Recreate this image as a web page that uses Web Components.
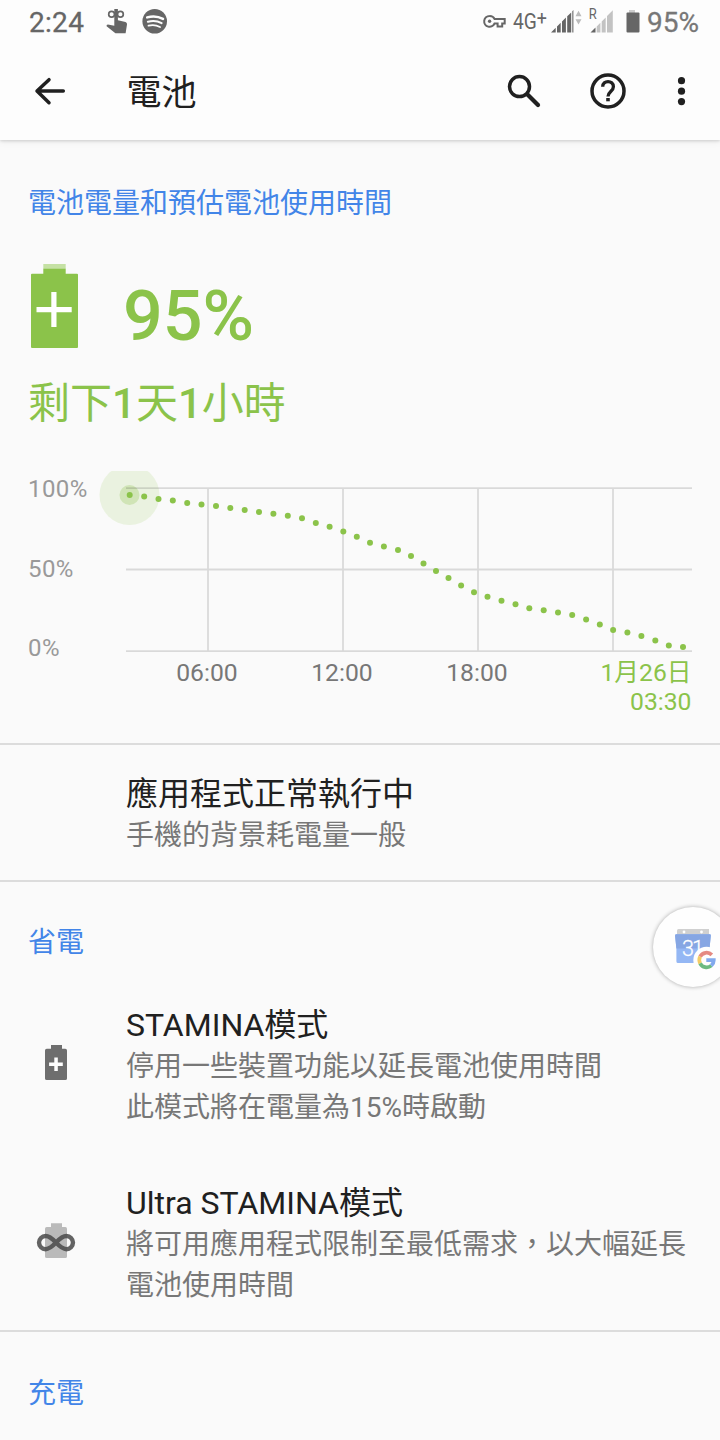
<!DOCTYPE html>
<html lang="zh-Hant-TW">
<head>
<meta charset="utf-8">
<title>電池</title>
<style>
html,body{margin:0;padding:0;background:#fafafa}
body{width:720px;height:1440px;overflow:hidden;position:relative;font-family:Roboto,"Noto Sans CJK TC",sans-serif;color:#202020}
</style>
</head>
<body>
<battery-page></battery-page>
<script>
const define = (name, html) => {
  const t = document.createElement('template');
  t.innerHTML = html;
  customElements.define(name, class extends HTMLElement {
    constructor() {
      super();
      this.attachShadow({mode: 'open'}).appendChild(t.content.cloneNode(true));
    }
  });
};

define('status-bar', `
<style>
:host{display:flex;height:44px;box-sizing:border-box;background:#fdfdfd;color:#666;align-items:flex-start}
.t{font-size:28px;line-height:32px;padding-top:7px;white-space:nowrap}
.clock{margin-left:29px;width:76px;letter-spacing:.3px;-webkit-text-stroke:.3px #666}
.pct{color:#777;width:73px;margin-left:7px;-webkit-text-stroke:.3px #777}
svg{display:block;flex:none}
.grow{flex:1}
</style>
<span class="t clock">2:24</span>
<svg width="24" height="44" viewBox="104 0 24 44"><g fill="none" stroke="#666" stroke-width="1.7"><ellipse cx="110.6" cy="14.3" rx="2.9" ry="2.9"/><ellipse cx="119.4" cy="14.3" rx="2.9" ry="2.9"/></g><path d="M113.3 9h3.6v11.2l7.6 1.800q1.800.6 1.500 2.600l-1.400 8.600h-10.200L105.600 26.300q-.4-1.500 1.300-1.700l6.400 1.200z" fill="#666"/></svg>
<svg width="28" height="44" viewBox="142 0 28 44" style="margin-left:13px"><circle cx="154.700" cy="21.300" r="12.300" fill="#666"/><g fill="none" stroke="#fdfdfd" stroke-linecap="round"><path d="M147.200 17.400q8.500-2.400 15.800 1.500" stroke-width="2.500"/><path d="M147.900 21.700q7.500-2 13.700 1.400" stroke-width="2.100"/><path d="M148.500 25.700q6.200-1.500 11.500 1.300" stroke-width="1.800"/></g></svg>
<span class="grow"></span>
<svg width="28" height="44" viewBox="482 0 28 44"><path d="M489.600 16a5.400 5.400 0 1 0 5 7.400h3v3.200h4.600v-3.200h2.500v-4.400h-10.100a5.400 5.400 0 0 0-5-3z" fill="none" stroke="#666" stroke-width="2"/><circle cx="489.600" cy="21.300" r="1.700" fill="#666"/></svg>
<svg width="40" height="44" viewBox="510 0 40 44"><text x="513" y="28.500" font-family="Roboto" font-size="21.500" fill="#666" textLength="34" lengthAdjust="spacingAndGlyphs">4G<tspan dy="-4" font-size="20">+</tspan></text></svg>
<svg width="70" height="44" viewBox="550 0 70 44"><path d="M551 32.500l4.700-4.700v4.700zM557 26.500l3.700-3.700v9.700h-3.700zM562 21.500l3.900-3.900v14.900H562zM567.200 16.300l4-3.900v20.100h-4zM572.300 11.200l1.100-1.100V32.500h-1.100z" fill="#666"/><path d="M575.500 16.200l3-5.400 3 5.400zM575.500 19.200h6l-3 5.200z" fill="#bbb"/><text x="588.700" y="18.700" font-family="Roboto" font-size="14" fill="#666" textLength="8" lengthAdjust="spacingAndGlyphs">R</text><path d="M590.500 32.500l5-5v5z" fill="#666"/><path d="M596.700 26.400l3.700-3.700v9.800h-3.700zM601.700 21.400l4-4v15.100h-4zM607 16l5.800-5.800v22.300H607z" fill="#c3c3c3"/></svg>
<svg width="20" height="44" viewBox="620 0 20 44"><path d="M629 10h6v3h-6z" fill="#ccc"/><path d="M627.500 12.500h11q1 0 1 1v18q0 1-1 1h-11q-1 0-1-1v-18q0-1 1-1z" fill="#666"/></svg>
<span class="t pct">95%</span>`);

define('app-bar', `
<style>
:host{display:flex;height:96px;background:#fdfdfd;position:relative;box-shadow:0 1px 3px rgba(0,0,0,.16),0 2px 8px rgba(0,0,0,.05);clip-path:inset(0 0 -14px 0)}
svg{display:block;flex:none}
h1{margin:0;width:360px;padding:25.500px 0 0 26.500px;box-sizing:border-box;font-size:35px;line-height:48px;font-weight:400;color:#202020}
</style>
<svg width="100" height="96" viewBox="0 44 100 96"><path d="M63.300 91H37.500M49 79.700L37 91l12 11.700" fill="none" stroke="#202020" stroke-width="3.500" stroke-linecap="round" stroke-linejoin="round"/></svg>
<h1><slot></slot></h1>
<svg width="260" height="96" viewBox="460 44 260 96"><g fill="none" stroke="#202020"><circle cx="519.500" cy="86.600" r="10" stroke-width="3.500"/><path d="M527.500 94.500L538 105" stroke-width="4.200" stroke-linecap="round"/><circle cx="608" cy="91" r="16" stroke-width="3.500"/><path d="M602.700 86.800c0-7 10.700-7 10.700 0 0 4.600-5.400 4.900-5.400 9.700" stroke-width="3.300"/></g><g fill="#202020"><path d="M606.200 98h3.600v3.300h-3.600z"/><circle cx="681.500" cy="80.700" r="3.600"/><circle cx="681.500" cy="91.200" r="3.600"/><circle cx="681.500" cy="101.600" r="3.600"/></g></svg>`);

define('section-title', `
<style>:host{display:block;padding-left:28px;font-size:28px;line-height:40px;height:40px;color:#4285e8;white-space:nowrap}</style><slot></slot>`);

define('section-line', `<style>:host{display:block;height:2px;background:#dcdcdc}</style>`);

define('battery-summary', `
<style>
:host{display:block;color:#8bc34a;padding-left:28px}
.top{display:flex;align-items:flex-start;height:118px}
svg{display:block;flex:none}
.pct{font-size:70px;line-height:80px;font-weight:500;margin:16px 0 0 43px}
.left{font-size:42px;line-height:50px;white-space:nowrap;padding-top:1px}
b{font-weight:500}
</style>
<div class="top">
<svg width="52" height="90" viewBox="28 260 52 90"><path d="M43.300 264h22.400v5H43.300z" fill="#c5e1a4"/><path d="M43.300 268.700h22.400v5.100H77q1 0 1 1v72q0 1.200-1 1.200H32q-1 0-1-1.200v-72q0-1 1-1h11.300z" fill="#8bc34a"/><path d="M51.300 292h5.200v15h15.200v5.200H56.500V327h-5.200v-14.800H36.500V307h14.800z" fill="#fff"/></svg>
<span class="pct">95%</span></div>
<div class="left">剩下<b>1</b>天<b>1</b>小時</div>`);

define('usage-chart', `
<style>
:host{display:block;height:250px}
.plot{display:flex;height:191px;padding-left:28px}
.y{display:flex;flex-direction:column;justify-content:space-between;width:62px;height:187px;padding-top:4px;font-size:24px;letter-spacing:.4px;line-height:28px;color:#999}
svg{display:block;flex:none}
.x{display:grid;grid-template-columns:135px 135px 135px 147px;padding-left:139.5px;font-size:24.700px;line-height:28px;color:#777;text-align:center;margin-top:-3px}
.end{text-align:right;color:#8bc34a;line-height:28.500px}
</style>
<div class="plot"><div class="y"><span>100%</span><span>50%</span><span>0%</span></div>
<svg width="630" height="191" viewBox="90 471 630 191"><circle cx="129.500" cy="495" r="30" fill="#8bc34a" fill-opacity=".14"/><circle cx="129.500" cy="495" r="10" fill="#8bc34a" fill-opacity=".28"/><path d="M126 488.200H692M126 569.500H692M126 651.200H692M208 487.300V652M343 487.300V652M478 487.300V652M613 487.300V652" stroke="#000" stroke-opacity=".13" stroke-width="1.800" fill="none"/><g class="dots" fill="#8bc34a"></g></svg></div>
<div class="x"><span>06:00</span><span>12:00</span><span>18:00</span><span class="end">1月26日<br>03:30</span></div>`);

define('pref-row', `
<style>
:host{display:flex;align-items:center}
.icon{width:126px;flex:none;display:flex}
.title{font-size:32px;line-height:41px;color:#202020;white-space:nowrap}
.sub{font-size:28px;line-height:41px;color:#777;white-space:nowrap}
</style>
<div class="icon"><slot name="icon"></slot></div>
<div><div class="title"><slot name="title"></slot></div><div class="sub"><slot></slot></div></div>`);

define('battery-icon', `
<style>:host{display:block}svg{display:block}</style>
<svg width="112" height="44" viewBox="0 1041 112 44"><path d="M51 1045h11v3.700h3.300q1.700 0 1.700 1.700v28q0 1.600-1.700 1.600H46.700q-1.700 0-1.700-1.600v-28q0-1.700 1.700-1.700H51z" fill="#6e6e6e"/><path d="M54.300 1057.500h3.500v5h5v3.600h-5v5h-3.500v-5h-5.200v-3.600h5.200z" fill="#fff"/></svg>`);

define('infinity-icon', `
<style>:host{display:block}svg{display:block}</style>
<svg width="112" height="44" viewBox="0 1219 112 44"><path d="M51 1223.300h11v3.700h3.300q1.700 0 1.700 1.700v27.700q0 1.600-1.700 1.600H46.700q-1.700 0-1.700-1.600v-27.700q0-1.700 1.700-1.700H51z" fill="#bababa"/><path d="M56 1242.600c-4-4.300-6.500-6.600-10.400-6.600a6.600 6.600 0 0 0 0 13.200c3.900 0 6.400-2.300 10.400-6.600s6.500-6.600 10.400-6.600a6.600 6.600 0 0 1 0 13.200c-3.900 0-6.400-2.300-10.400-6.600z" fill="none" stroke="#4c4c4c" stroke-opacity=".87" stroke-width="4.400"/></svg>`);

define('calendar-bubble', `
<style>
:host{display:block;position:absolute;left:640px;top:894px;width:80px;height:106px;overflow:hidden}
.disc{width:80px;height:80px;border-radius:50%;background:#fefefe;margin:12.700px 0 0 13px;box-shadow:0 0 4px rgba(0,0,0,.32)}
svg{position:absolute;left:0;top:0}
</style>
<div class="disc"></div>
<svg width="80" height="106" viewBox="640 894 80 106"><path d="M678.500 929h30.500v8H677v-6.500q0-1.500 1.500-1.500z" fill="#d0d0d0"/><circle cx="684" cy="932" r="1.400" fill="#fff"/><circle cx="701.500" cy="932" r="1.400" fill="#fff"/><path d="M676 934.300h34q1 0 .8 1.500l-1.300 12.700v14.500H678q-1.500 0-1.600-1.500v-13l-1.300-12.500q-.1-1.700.9-1.700z" fill="#94b7f4"/><path d="M676 934.300h34q1 0 .8 1.500l-1.300 12.700h-33.100l-1.300-12.500q-.1-1.700.9-1.700z" fill="#86a6e3"/><text x="682" y="956.300" font-family="Roboto" font-size="21.500" font-weight="300" fill="#fff" textLength="22" stroke="#fff" stroke-width=".3">31</text><circle cx="706.500" cy="960" r="13.200" fill="#fefefe"/><g fill="none" stroke-width="3.700"><path d="M711.800 954.900a7.300 7.300 0 0 0-11.700 1.800" stroke="#e58a82"/><path d="M700.100 956.700a7.300 7.300 0 0 0 0 6.600" stroke="#f4cc65"/><path d="M700.100 963.300a7.300 7.300 0 0 0 11.200 2.300" stroke="#6cba80"/><path d="M711.300 965.600q2.500-2.300 2.500-5.400H706.300" stroke="#82a9ed"/></g></svg>`);

define('battery-page', `
<style>
:host{display:flex;flex-direction:column;height:1440px;background:#fafafa}
:host>*{flex:none}
</style>
<status-bar></status-bar>
<app-bar>電池</app-bar>
<section-title style="margin-top:44px">電池電量和預估電池使用時間</section-title>
<battery-summary style="margin-top:36px"></battery-summary>
<usage-chart style="margin-top:42px"></usage-chart>
<section-line style="margin-top:22px"></section-line>
<pref-row style="margin-top:29px"><span slot="title">應用程式正常執行中</span>手機的背景耗電量一般</pref-row>
<section-line style="margin-top:24px"></section-line>
<section-title style="margin-top:41px">省電</section-title>
<pref-row style="margin-top:42px"><battery-icon slot="icon" style="margin-top:-7px"></battery-icon><span slot="title">STAMINA模式</span>停用一些裝置功能以延長電池使用時間<br>此模式將在電量為15%時啟動</pref-row>
<pref-row style="margin-top:55px"><infinity-icon slot="icon" style="margin-top:-7px"></infinity-icon><span slot="title">Ultra STAMINA模式</span>將可用應用程式限制至最低需求，以大幅延長<br>電池使用時間</pref-row>
<section-line style="margin-top:24px"></section-line>
<section-title style="margin-top:42px">充電</section-title>
<calendar-bubble></calendar-bubble>`);

// Projected charge, one [x, y] point per sample
const samples = [[129.7,495],[144.2,496.5],[158.5,498.9],[172.8,500.4],[187.2,503.1],[201.5,504.6],[216,505.9],[230.3,507.9],[244.7,510],[259,512.1],[273.4,513.7],[287.8,515.7],[302,518.3],[315.8,523],[329.6,526.8],[343.3,531.5],[356.8,536.8],[370,542.8],[383.9,546.4],[398,549.9],[411,556.1],[423.500,563.6],[436,570.9],[448.5,578.1],[461.1,585.4],[474,592.3],[487.5,596.8],[501.5,600.7],[515.5,604.3],[529.3,608.3],[543.7,610.3],[558,612.5],[572.2,615.1],[586.1,619.5],[599.8,624.4],[613.1,630],[627.4,632.5],[641.4,635.9],[655.3,640.5],[668.8,645.6],[683,647]];
const dots = document.querySelector('battery-page').shadowRoot.querySelector('usage-chart').shadowRoot.querySelector('.dots');
for (const [x, y] of samples) {
  const c = document.createElementNS('http://www.w3.org/2000/svg', 'circle');
  c.setAttribute('cx', x); c.setAttribute('cy', y); c.setAttribute('r', 3);
  dots.appendChild(c);
}
</script>
</body>
</html>
